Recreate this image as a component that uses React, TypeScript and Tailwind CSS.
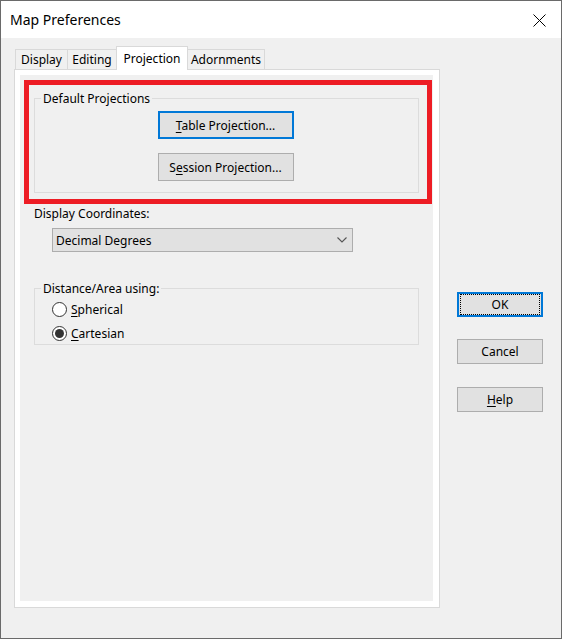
import React from "react";

function Btn({
  children,
  focused,
  dotted,
  className,
}: {
  children: React.ReactNode;
  focused?: boolean;
  dotted?: boolean;
  className: string;
}) {
  return (
    <div
      className={
        "flex items-center justify-center bg-[#e1e1e1] " +
        (focused ? "border-2 border-[#0078d7] " : "border border-[#adadad] ") +
        className
      }
    >
      {dotted ? (
        <div className="w-full h-full m-[1px] border border-dotted border-black flex items-center justify-center">
          {children}
        </div>
      ) : (
        children
      )}
    </div>
  );
}

function Radio({ checked, label }: { checked?: boolean; label: React.ReactNode }) {
  return (
    <div className="flex items-center h-[24px]">
      <div className="w-[15px] h-[15px] rounded-full border border-[#333333] bg-white flex items-center justify-center">
        {checked && <div className="w-[9px] h-[9px] rounded-full bg-[#333333]" />}
      </div>
      <span className="ml-[4px]">{label}</span>
    </div>
  );
}

export default function App() {
  return (
    <div className="w-[562px] h-[639px] border border-[#6a6a6a] bg-[#f0f0f0] flex flex-col text-[12px] leading-[15px] text-black font-['Segoe_UI','Noto_Sans',sans-serif] overflow-hidden">
      <div className="h-[37px] shrink-0 bg-white flex items-center justify-between pl-[9px] pr-[15px]">
        <span className="text-[14px] leading-[20px]">Map Preferences</span>
        <svg width="13" height="13" viewBox="0 0 13 13" className="mt-[1px]">
          <path d="M0.5 0.5 L12.5 12.5 M12.5 0.5 L0.5 12.5" stroke="#000" strokeWidth="1" />
        </svg>
      </div>
      <div className="flex">
        <div className="ml-[13px] mt-[8px] flex flex-col">
          <div className="flex items-end h-[23px] pl-[1px]">
            <div className="w-[53px] h-[20px] border border-b-0 border-[#d9d9d9] bg-[#f0f0f0] flex items-center justify-center">
              Display
            </div>
            <div className="-ml-px w-[50px] h-[20px] border border-b-0 border-[#d9d9d9] bg-[#f0f0f0] flex items-center justify-center">
              Editing
            </div>
            <div className="-ml-px relative z-10 w-[72px] h-[24px] -mb-px border border-b-0 border-[#d9d9d9] bg-white flex items-start justify-center pt-[4px]">
              Projection
            </div>
            <div className="-ml-px w-[78px] h-[20px] border border-b-0 border-[#d9d9d9] bg-[#f0f0f0] flex items-center justify-center">
              Adornments
            </div>
          </div>
          <div className="w-[426px] h-[539px] border border-[#d9d9d9] bg-white pt-[5px] pl-[5px] pr-[6px] pb-[6px]">
            <div className="w-full h-full bg-[#f0f0f0] flex flex-col">
              <div className="ml-[4px] mt-[5px] w-[408px] h-[124px] border-[5px] border-[#ed1c24]">
                <fieldset className="ml-[5px] mt-[6px] w-[385px] h-[102px] border border-[#dcdcdc] flex flex-col items-center">
                  <legend className="ml-[6px] px-[2px] leading-[15px]">Default Projections</legend>
                  <Btn focused className="mt-[5px] -ml-[2px] w-[136px] h-[28px]">
                    <span>
                      <span className="underline underline-offset-2">T</span>able Projection...
                    </span>
                  </Btn>
                  <Btn className="mt-[14px] -ml-[2px] w-[136px] h-[28px]">
                    <span>
                      S<span className="underline underline-offset-2">e</span>ssion Projection...
                    </span>
                  </Btn>
                </fieldset>
              </div>
              <div className="ml-[14px] mt-[2px]">Display Coordinates:</div>
              <div className="ml-[32px] mt-[7px] w-[301px] h-[24px] border border-[#adadad] bg-[#e1e1e1] flex items-center justify-between pl-[3px] pr-[5px]">
                <span>Decimal Degrees</span>
                <svg width="10" height="6" viewBox="0 0 10 6">
                  <path d="M0.5 0.5 L5 5 L9.5 0.5" stroke="#555" strokeWidth="1.1" fill="none" />
                </svg>
              </div>
              <fieldset className="ml-[14px] mt-[29px] w-[385px] h-[64px] border border-[#dcdcdc] pl-[17px]">
                <legend className="ml-[-11px] px-[2px] leading-[15px]">Distance/Area using:</legend>
                <div className="mt-[1px] flex flex-col">
                  <Radio
                    label={
                      <>
                        <span className="underline underline-offset-2">S</span>pherical
                      </>
                    }
                  />
                  <Radio
                    checked
                    label={
                      <>
                        <span className="underline underline-offset-2">C</span>artesian
                      </>
                    }
                  />
                </div>
              </fieldset>
            </div>
          </div>
        </div>
        <div className="ml-[17px] mt-[254px] flex flex-col">
          <Btn focused dotted className="w-[86px] h-[25px]">
            OK
          </Btn>
          <Btn className="mt-[22px] w-[86px] h-[25px]">Cancel</Btn>
          <Btn className="mt-[23px] w-[86px] h-[25px]">
            <span>
              <span className="underline underline-offset-2">H</span>elp
            </span>
          </Btn>
        </div>
      </div>
    </div>
  );
}
